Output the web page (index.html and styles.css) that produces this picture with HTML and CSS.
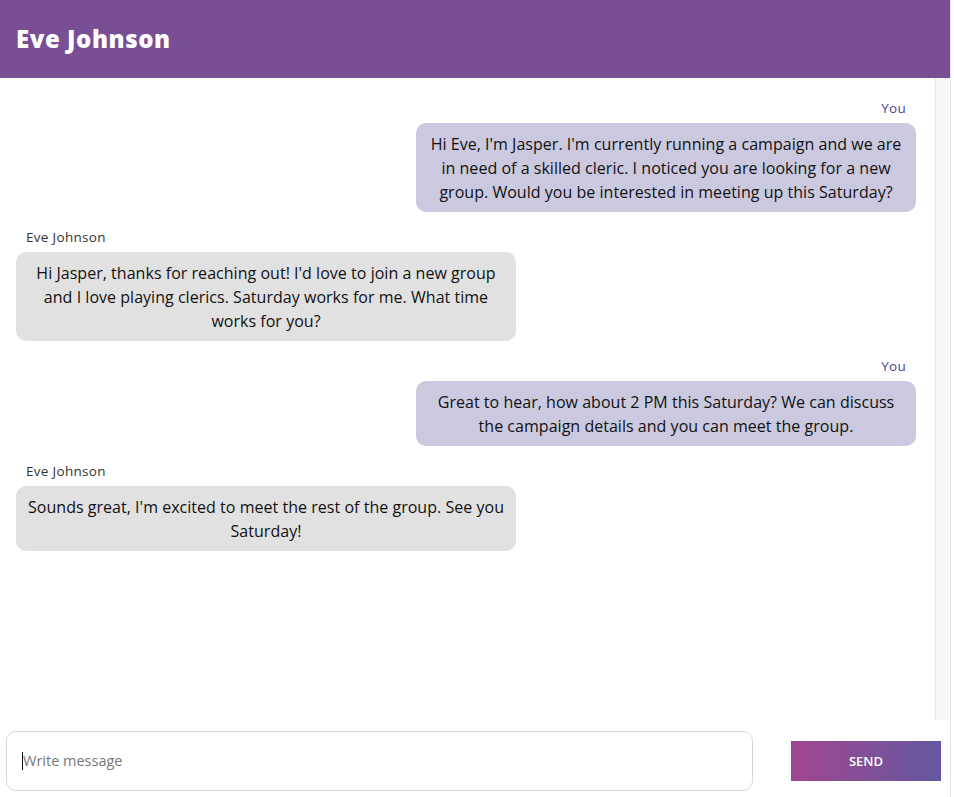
FILE: index.html
```html
<!DOCTYPE html>
<html lang="en">
<head>
<meta charset="utf-8">
<title>Chat</title>
<link rel="stylesheet" href="styles.css">
</head>
<body>
<div class="app">
  <header class="header"><h1 class="title">Eve Johnson</h1></header>
  <div class="chat">
    <div class="messages">
      <div class="msg sent">
        <div class="who">You</div>
        <div class="bubble">Hi Eve, I'm Jasper. I'm currently running a campaign and we are in need of a skilled cleric. I noticed you are looking for a new group. Would you be interested in meeting up this Saturday?</div>
      </div>
      <div class="msg received">
        <div class="who">Eve Johnson</div>
        <div class="bubble">Hi Jasper, thanks for reaching out! I'd love to join a new group and I love playing clerics. Saturday works for me. What time works for you?</div>
      </div>
      <div class="msg sent">
        <div class="who">You</div>
        <div class="bubble">Great to hear, how about 2 PM this Saturday? We can discuss the campaign details and you can meet the group.</div>
      </div>
      <div class="msg received">
        <div class="who">Eve Johnson</div>
        <div class="bubble">Sounds great, I'm excited to meet the rest of the group. See you Saturday!</div>
      </div>
    </div>
    <div class="scrolltrack"></div>
  </div>
  <div class="composer">
    <div class="input"><span class="caret"></span><span class="placeholder">Write message</span></div>
    <button class="send">SEND</button>
  </div>
</div>
</body>
</html>
```
FILE: styles.css
```css
* { box-sizing: border-box; }
html, body { margin: 0; padding: 0; background: #fff; }
body { font-family: "Open Sans", "DejaVu Sans", sans-serif; color: #111; }
.app {
  width: 951px;
  height: 797px;
  display: flex;
  flex-direction: column;
  border-right: 1px solid #e4e4e4;
}
.header {
  height: 78px;
  flex: none;
  background: #784e95;
  display: flex;
  align-items: center;
  padding: 0 16px 2px;
}
.title {
  margin: 0;
  color: #fff;
  font-size: 24px;
  font-weight: 800;
  letter-spacing: 0.55px;
}
.chat {
  height: 642px;
  flex: none;
  display: flex;
}
.messages {
  flex: 1;
  padding: 21px 19px 0 16px;
  display: flex;
  flex-direction: column;
  gap: 16px;
}
.msg { display: flex; flex-direction: column; }
.msg.sent { align-items: flex-end; }
.msg.received { align-items: flex-start; }
.who {
  font-size: 13.5px;
  line-height: 18px;
  margin-bottom: 6px;
  letter-spacing: 0.3px;
}
.sent .who { color: #4b3f91; padding-right: 10px; }
.received .who { color: #333; padding-left: 10px; }
.bubble {
  width: 500px;
  padding: 9px 11px 8px;
  border-radius: 10px;
  font-size: 16px;
  line-height: 24px;
  letter-spacing: 0.03px;
  text-align: center;
  color: #111;
}
.sent .bubble { background: #cbc9e0; }
.received .bubble { background: #e1e1e1; }
.scrolltrack {
  width: 15px;
  flex: none;
  background: #f8f8f8;
  border-left: 1px solid #e6e6e6;
}
.composer {
  flex: 1;
  display: flex;
  align-items: center;
  padding: 4px 0 0 6px;
  gap: 38px;
}
.input {
  flex: none;
  width: 747px;
  height: 60px;
  border: 1px solid #d8d8d8;
  border-radius: 10px;
  display: flex;
  align-items: center;
  padding-left: 15px;
}
.caret { width: 1px; height: 18px; background: #111; }
.placeholder { font-size: 14.5px; color: #777; }
.send {
  flex: none;
  width: 150px;
  height: 40px;
  border: 0;
  background: linear-gradient(90deg, #a0468f, #6358a0);
  color: #fff;
  font-family: inherit;
  font-size: 13px;
  font-weight: 600;
}
```
